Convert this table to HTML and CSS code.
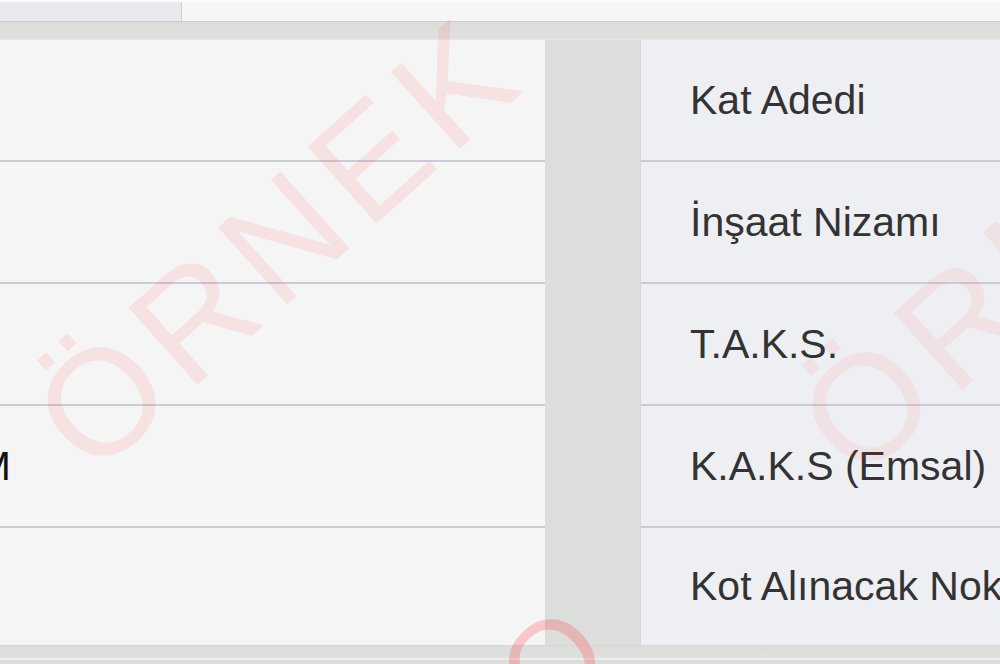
FILE: index.html
```html
<!DOCTYPE html>
<html lang="tr">
<head>
    <meta charset="UTF-8">
    <meta name="viewport" content="width=device-width, initial-scale=1.0">
    <title>İmar Durumu</title>
    <link rel="stylesheet" href="styles.css">
</head>
<body>
    <div class="tabs">
        <div class="tab tab-active"></div>
        <div class="tab"></div>
    </div>
    <div class="band"></div>
    <div class="grid">
        <div class="panel values">
            <div class="row"></div>
            <div class="row"></div>
            <div class="row"></div>
            <div class="row">AYRIK NİZAM</div>
            <div class="row"></div>
        </div>
        <div class="panel labels">
            <div class="row">Kat Adedi</div>
            <div class="row">İnşaat Nizamı</div>
            <div class="row">T.A.K.S.</div>
            <div class="row">K.A.K.S (Emsal)</div>
            <div class="row">Kot Alınacak Nokta</div>
        </div>
    </div>
    <div class="band band-bottom"></div>

    <!-- watermark -->
    <span class="mark mark-left">ÖRNEK</span>
    <span class="mark mark-right">ÖRNEK</span>
    <span class="mark mark-bottom">O</span>
</body>
</html>
```

FILE: styles.css
```css
body {
    margin: 0;
    height: 664px;
    overflow: hidden;
    position: relative;
    font-family: "Liberation Sans", Arial, sans-serif;
    background-color: #dcdedb;
}
.tabs {
    display: flex;
    height: 19px;
    border-top: 2px solid #fbfbfb;
    border-bottom: 1px solid #cdced3;
}
.tab {
    flex: 1;
    background-color: #f6f6f6;
}
.tab-active {
    flex: 0 0 181px;
    background-color: #e9eaee;
    border-right: 1px solid #d0d1d5;
}
.band {
    height: 17px;
    background: linear-gradient(#dcdddb, #e0e1de);
    border-bottom: 1px solid #e6e7ea;
}
.grid {
    display: grid;
    grid-template-columns: 845px 360px;
    column-gap: 95px;
    margin-left: -300px;
    height: 605px;
}
.panel {
    display: flex;
    flex-direction: column;
}
.values {
    background-color: #f5f5f5;
    color: #111;
}
.labels {
    background-color: #eeeff2;
    border-left: 1px solid #d6d8de;
    color: #333;
}
.row {
    height: 120px;
    display: flex;
    align-items: center;
    padding-left: 52px;
    border-bottom: 2px solid #c9ccd8;
    font-size: 41px;
    white-space: nowrap;
}
.labels .row {
    padding-left: 49px;
}
.row:last-child {
    flex: 1;
    border-bottom: none;
}
.band-bottom {
    height: 12px;
    background-color: #dcdcda;
    border-top: 1px solid #d6d7d9;
    border-bottom: 2px solid #eeeeee;
}
.mark {
    position: absolute;
    font-size: 150px;
    line-height: 150px;
    letter-spacing: 12px;
    white-space: nowrap;
    color: rgba(255, 60, 60, 0.1);
    transform-origin: 0 127px;
    transform: rotate(-42deg);
    pointer-events: none;
}
.mark-left {
    left: 93px;
    top: 352px;
}
.mark-right {
    left: 858px;
    top: 357px;
    color: rgba(255, 60, 60, 0.08);
}
.mark-bottom {
    left: 552px;
    top: 605px;
    font-size: 120px;
    color: rgba(255, 60, 70, 0.25);
}
```
